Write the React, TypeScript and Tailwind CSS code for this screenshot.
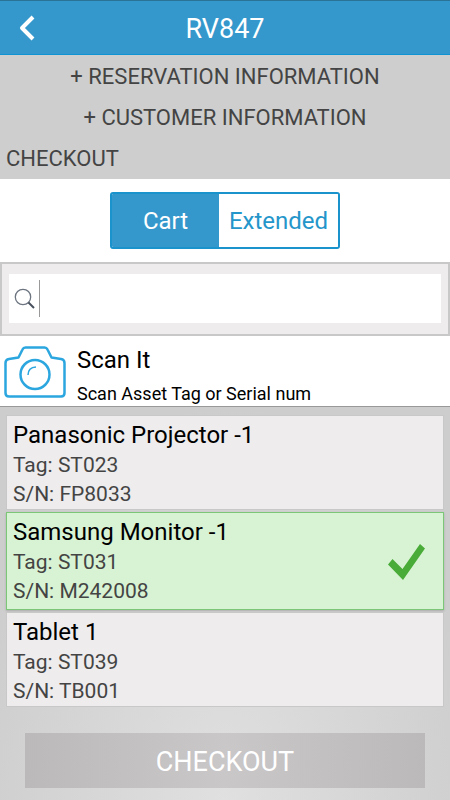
import { useState } from 'react';

type Item = { name: string; tag: string; serial: string; checked: boolean };

const ITEMS: Item[] = [
  { name: 'Panasonic Projector -1', tag: 'ST023', serial: 'FP8033', checked: false },
  { name: 'Samsung Monitor -1', tag: 'ST031', serial: 'M242008', checked: true },
  { name: 'Tablet 1', tag: 'ST039', serial: 'TB001', checked: false },
];

function Header({ title }: { title: string }) {
  return (
    <header className="grid h-[55px] grid-cols-[56px_1fr_56px] items-center border-t border-b border-t-[#2a7396] border-b-[#0f93d2] bg-[#3598cc] text-white">
      <button aria-label="Back" className="flex h-full items-center pl-[18px]">
        <svg width="18" height="28" viewBox="0 0 18 28" fill="none" stroke="currentColor" strokeWidth="4">
          <path d="M15 3 4 14l11 11" strokeLinejoin="round" />
        </svg>
      </button>
      <h1 className="pt-0.5 text-center text-[27px] leading-8">{title}</h1>
    </header>
  );
}

function Tabs() {
  const [tab, setTab] = useState('Cart');
  const tabClass = (active: boolean) =>
    active ? 'bg-[#3598cc] text-white' : 'bg-white text-[#2596ca]';

  return (
    <div className="flex h-[83px] justify-center pt-[13px]">
      <div className="grid h-[57px] grid-cols-[107px_119px] overflow-hidden rounded-[3px] border-2 border-[#1a92cc] text-2xl">
        {['Cart', 'Extended'].map((t) => (
          <button key={t} className={tabClass(tab === t)} onClick={() => setTab(t)}>
            {t}
          </button>
        ))}
      </div>
    </div>
  );
}

function Search() {
  return (
    <div className="border-2 border-[#c8c8c8] bg-[#eeeced] px-[7px] pt-[10px] pb-[11px]">
      <label className="flex h-[49px] items-center bg-white pl-[5px]">
        <svg width="22" height="22" viewBox="0 0 22 22" fill="none" stroke="#6d7580">
          <circle cx="9" cy="9" r="7.7" strokeWidth="1.3" />
          <path d="m14.5 14.5 5.5 5.5" stroke="#47505c" strokeWidth="2" />
        </svg>
        <input
          type="text"
          aria-label="Search"
          className="ml-[3px] h-[37px] min-w-0 flex-1 border-l border-[#999] pl-2 text-xl outline-none"
        />
      </label>
    </div>
  );
}

function ScanRow() {
  return (
    <button className="flex h-[71px] w-full items-center gap-[11px] border-b border-[#999] pl-1 text-left text-black">
      <svg width="62" height="54" viewBox="0 0 62 54" fill="none" stroke="#2ba6df" strokeWidth="2.5">
        <path
          d="M5 15 14.500 13.500l4-8q.9-2 3-2h19q2.100 0 3 2l4 8 9.500 1.500q3.500.5 3.500 4v30q0 3.500-3.500 3.500H5q-3.500 0-3.500-3.500v-30q0-3.500 3.500-4Z"
          strokeLinejoin="round"
        />
        <circle cx="31" cy="30.500" r="14.500" />
        <path d="M24 31q0-7.500 8-8" strokeWidth="1.500" />
      </svg>
      <span className="flex flex-col pt-3">
        <span className="text-2xl leading-8">Scan It</span>
        <span className="pt-0.5 text-lg leading-8">Scan Asset Tag or Serial num</span>
      </span>
    </button>
  );
}

function ItemCard({ item }: { item: Item }) {
  return (
    <li
      className={`flex items-center border pt-1 pr-[17px] pl-1.5 ${
        item.checked
          ? 'border-[#7cc777] bg-[#d8f3d3] pb-[3px] shadow-[0_1px_2px_#aaa]'
          : 'border-[#c9c8c9] bg-[#eeeced]'
      }`}
    >
      <div className="flex-1 text-[21px] leading-[29px] text-[#444]">
        <h2 className="pb-px text-2xl leading-[30px] text-black">{item.name}</h2>
        <p>Tag: {item.tag}</p>
        <p>S/N: {item.serial}</p>
      </div>
      {item.checked && (
        <svg width="38" height="36" viewBox="0 0 38 36" fill="#4aac38" role="img" aria-label="Selected">
          <path d="M0 20.500 4.500 15 14.500 25 32 0l5 4.500L15 36Z" />
        </svg>
      )}
    </li>
  );
}

export default function App() {
  return (
    <div className="flex min-h-screen flex-col bg-white font-[Roboto,sans-serif]">
      <Header title="RV847" />
      <section className="flex flex-col bg-[#cecece] pt-px text-[22px] leading-[41px] text-[#444]">
        <button>+ RESERVATION INFORMATION</button>
        <button>+ CUSTOMER INFORMATION</button>
        <h2 className="pl-1.5">CHECKOUT</h2>
      </section>
      <Tabs />
      <Search />
      <ScanRow />
      <main className="flex flex-1 flex-col bg-[radial-gradient(ellipse_60%_100%_at_50%_100%,#e0e0e0,#cdcdcd)] px-1.5 pt-2">
        <ul className="flex flex-col gap-0.5">
          {ITEMS.map((item) => (
            <ItemCard key={item.tag} item={item} />
          ))}
        </ul>
        <button className="mx-[19px] mt-[26px] mb-3 h-[55px] bg-[linear-gradient(90deg,#bbb9ba,#c9c7c8_50%,#bbb9ba)] pt-[3px] text-[27px] text-white">
          CHECKOUT
        </button>
      </main>
    </div>
  );
}
